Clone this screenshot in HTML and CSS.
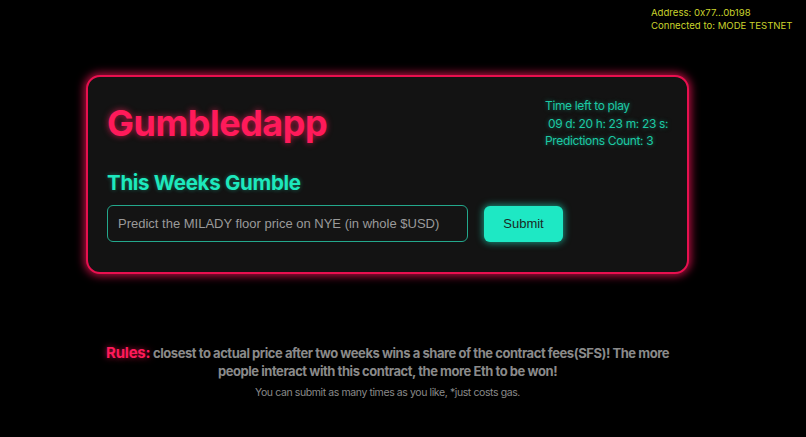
FILE: index.html
```html
<!DOCTYPE html>
<html lang="en">
<head>
<meta charset="utf-8">
<title>Gumbledapp</title>
<link rel="stylesheet" href="styles.css">
</head>
<body>
<header class="wallet">
  <div>Address: 0x77...0b198</div>
  <div>Connected to: MODE TESTNET</div>
</header>
<main class="wrap">
  <section class="card">
    <div class="card-top">
      <div class="left">
        <h1 class="title">Gumbledapp</h1>
        <h2 class="subtitle">This Weeks Gumble</h2>
      </div>
      <div class="timer">
        <div>Time left to play</div>
        <div>&nbsp;09 d: 20 h: 23 m: 23 s:</div>
        <div>Predictions Count: 3</div>
      </div>
    </div>
    <form class="row" onsubmit="return false">
      <input class="field" type="text" placeholder="Predict the MILADY floor price on NYE (in whole $USD)">
      <button class="btn" type="submit">Submit</button>
    </form>
  </section>
  <section class="rules">
    <p class="rules-main"><span class="rules-label">Rules:</span> closest to actual price after two weeks wins a share of the contract fees(SFS)! The more people interact with this contract, the more Eth to be won!</p>
    <p class="rules-note">You can submit as many times as you like, *just costs gas.</p>
  </section>
</main>
</body>
</html>
```

FILE: styles.css
```css
html, body {
  margin: 0;
  padding: 0;
  background: #000;
  height: 100%;
}
body {
  font-family: Inter, "Noto Sans", sans-serif;
  color: #fff;
  overflow: hidden;
}
.wallet {
  display: flex;
  flex-direction: column;
  align-items: flex-start;
  padding: 6px 0 0 651px;
  font-size: 9.6px;
  line-height: 13px;
  color: #c9d32c;
  height: 32px;
  box-sizing: border-box;
}
.wrap {
  width: 603px;
  margin: 43px 0 0 86px;
}
.card {
  box-sizing: border-box;
  height: 199px;
  background: #131313;
  border: 2px solid #e8104f;
  border-radius: 14px;
  box-shadow: 0 0 9px 2px rgba(240, 20, 85, 0.75);
  padding: 18px 20px 0 19px;
}
.card-top {
  display: flex;
  justify-content: space-between;
}
.title {
  margin: 0;
  font-size: 36px;
  font-weight: 700;
  line-height: 56px;
  letter-spacing: -0.5px;
  color: #ff1a5a;
  text-shadow: 0 0 6px rgba(255, 30, 90, 0.7);
}
.subtitle {
  margin: 20px 0 0;
  font-size: 20.5px;
  font-weight: 700;
  line-height: 24px;
  letter-spacing: -0.3px;
  color: #1de8bd;
  text-shadow: 0 0 4px rgba(30, 232, 189, 0.4);
}
.timer {
  margin: 2px 0 0 0;
  width: 122px;
  font-size: 12px;
  line-height: 17.5px;
  color: #1cc9a4;
  letter-spacing: -0.35px;
  text-shadow: 0 0 4px rgba(28, 201, 164, 0.5);
  white-space: nowrap;
}
.row {
  display: flex;
  align-items: center;
  gap: 16px;
  margin-top: 10px;
}
.field {
  box-sizing: border-box;
  width: 361px;
  height: 37px;
  background: #141414;
  border: 1px solid #23a88c;
  border-radius: 6px;
  padding: 0 10px;
  font-family: "Liberation Sans", Arial, sans-serif;
  font-size: 13px;
  color: #ddd;
  outline: none;
}
.field::placeholder {
  color: #9a9a9a;
}
.btn {
  box-sizing: border-box;
  width: 79px;
  height: 36px;
  border: none;
  border-radius: 6px;
  background: #1ee8c4;
  color: #1a2a26;
  font-family: "Liberation Sans", Arial, sans-serif;
  font-size: 13px;
  box-shadow: 0 0 7px 1px rgba(30, 232, 196, 0.6);
  cursor: pointer;
}
.rules {
  margin-top: 70px;
  text-align: center;
}
.rules-main {
  margin: 0 auto;
  width: 590px;
  font-size: 13px;
  font-weight: 700;
  line-height: 18px;
  letter-spacing: -0.45px;
  color: #8a8a8a;
}
.rules-label {
  font-size: 15px;
  letter-spacing: -0.2px;
  color: #ff1a5a;
  text-shadow: 0 0 6px rgba(255, 30, 90, 0.7);
}
.rules-note {
  margin: 6px 0 0;
  font-size: 10.5px;
  color: #8a8a8a;
  letter-spacing: -0.4px;
}
```
